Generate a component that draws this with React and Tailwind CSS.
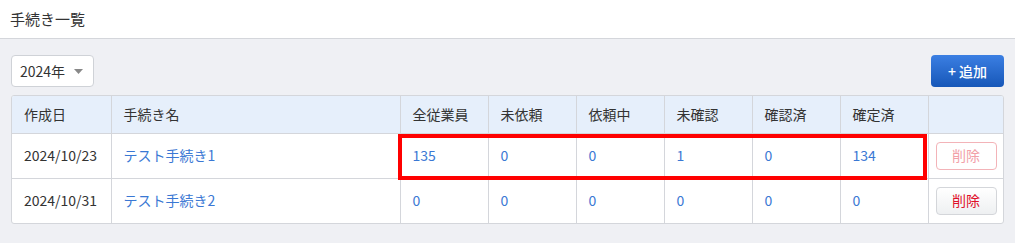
import React from 'react';

const cols = ['全従業員', '未依頼', '依頼中', '未確認', '確認済', '確定済'];

const rows = [
  { date: '2024/10/23', name: 'テスト手続き1', counts: [135, 0, 0, 1, 0, 134], disabled: true },
  { date: '2024/10/31', name: 'テスト手続き2', counts: [0, 0, 0, 0, 0, 0], disabled: false },
];

function DeleteButton({ disabled }) {
  if (disabled) {
    return (
      <button className="w-[61px] h-[28px] rounded-[4px] border border-[#f3b3b8] bg-white text-[#f2a0a8] text-[14px]">
        削除
      </button>
    );
  }
  return (
    <button className="w-[61px] h-[28px] rounded-[4px] border border-[#d4d6da] bg-gradient-to-b from-white to-[#eef0f2] text-[#e0102a] text-[14px]">
      削除
    </button>
  );
}

export default function App() {
  return (
    <div className="w-[1015px] h-[243px] bg-[#eff0f4] text-[#333] text-[14px] font-['Noto_Sans_CJK_JP','Noto_Sans',sans-serif]">
      <header className="h-[39px] bg-white border-b border-[#d4d6db] flex items-center px-[10px]">
        <h1 className="text-[15px] text-[#333]">手続き一覧</h1>
      </header>

      <div className="px-[10px] pt-[16px]">
        <div className="flex items-center justify-between">
          <div className="w-[83px] h-[32px] ml-[1px] bg-white border border-[#cfd2d7] rounded-[4px] flex items-center justify-between pl-[8px] pr-[10px]">
            <span className="text-[14px] text-[#333]">2024年</span>
            <svg width="9" height="5" viewBox="0 0 9 5"><path d="M0 0h9L4.5 5z" fill="#888" /></svg>
          </div>
          <button className="w-[73px] h-[32px] mr-[1px] rounded-[4px] bg-gradient-to-b from-[#3b7fe3] to-[#1657b8] text-white text-[14px] font-medium">
            + 追加
          </button>
        </div>

        <div className="relative mt-[8px] ml-[1px] w-[993px] bg-white border border-[#d4d6db] rounded-[3px] overflow-hidden">
          <table className="w-full border-collapse table-fixed">
            <colgroup>
              <col className="w-[99px]" />
              <col className="w-[289px]" />
              {cols.map((c) => (
                <col key={c} className="w-[88px]" />
              ))}
              <col />
            </colgroup>
            <thead>
              <tr className="h-[37px] bg-[#e6effb]">
                <th className="text-left font-normal px-[12px] border-r border-[#d4d6db]">作成日</th>
                <th className="text-left font-normal px-[12px] border-r border-[#d4d6db]">手続き名</th>
                {cols.map((c) => (
                  <th key={c} className="text-left font-normal px-[12px] border-r border-[#d4d6db]">{c}</th>
                ))}
                <th />
              </tr>
            </thead>
            <tbody>
              {rows.map((r) => (
                <tr key={r.date} className="h-[45px] border-t border-[#d4d6db]">
                  <td className="px-[12px] border-r border-[#d4d6db]">{r.date}</td>
                  <td className="px-[12px] border-r border-[#d4d6db] text-[#3a78d4]">{r.name}</td>
                  {r.counts.map((n, i) => (
                    <td key={i} className="px-[12px] border-r border-[#d4d6db] text-[#3a78d4]">{n}</td>
                  ))}
                  <td className="pl-[7px]">
                    <DeleteButton disabled={r.disabled} />
                  </td>
                </tr>
              ))}
            </tbody>
          </table>
          <div className="absolute left-[386px] top-[38px] w-[529px] h-[46px] border-[4px] border-[#ff0000]" />
        </div>
      </div>
    </div>
  );
}
